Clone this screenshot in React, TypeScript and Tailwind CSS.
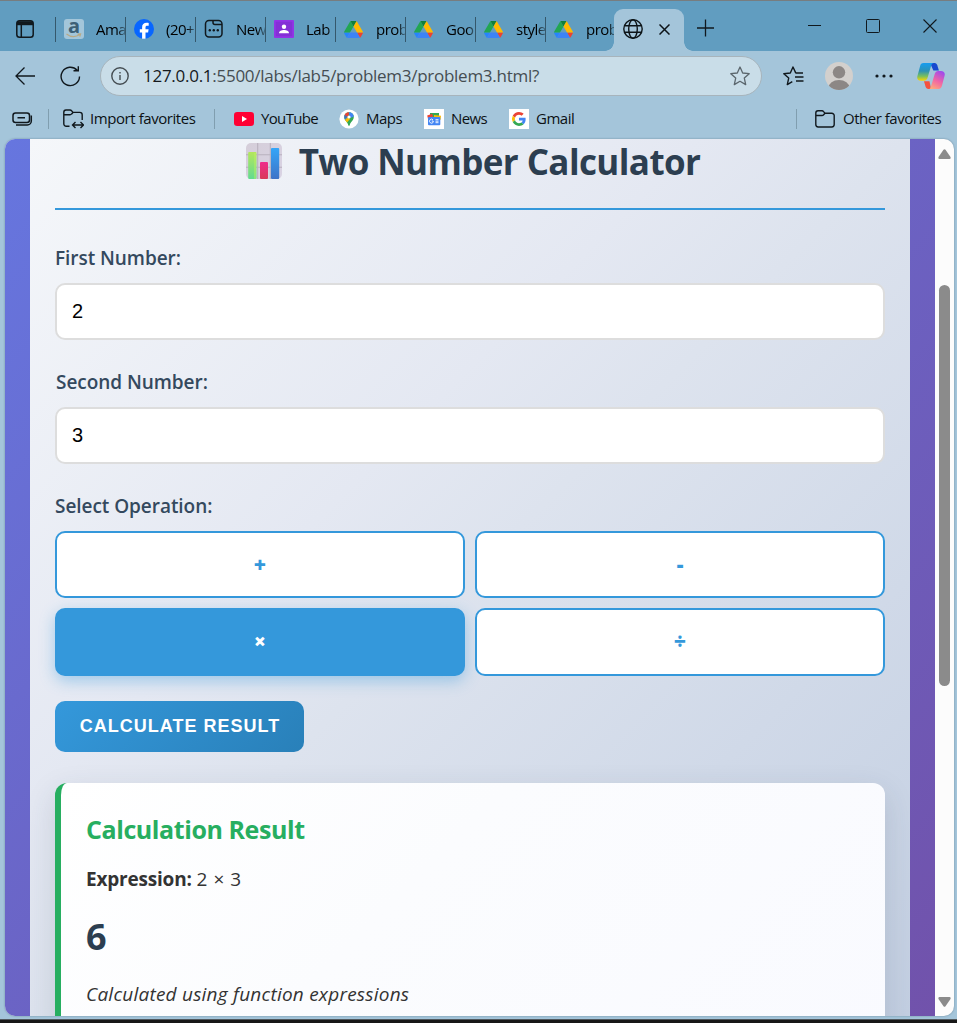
import React, { useState } from "react";

type IconProps = { className?: string };

const Drive = () => (
  <svg width="19" height="17" viewBox="0 0 87.3 78" className="shrink-0">
    <path d="m6.6 66.85 3.85 6.65c.8 1.4 1.95 2.5 3.3 3.3l13.75-23.8h-27.5c0 1.55.4 3.1 1.2 4.5z" fill="#2684fc" />
    <path d="m43.65 25-13.75-23.8c-1.35.8-2.5 1.9-3.3 3.3l-25.4 44a9 9 0 0 0-1.2 4.5h27.5z" fill="#22a652" />
    <path d="m73.55 76.8c1.35-.8 2.5-1.9 3.3-3.3l1.6-2.75 7.65-13.25c.8-1.4 1.2-2.95 1.2-4.5h-27.5l5.85 11.5z" fill="#ea4335" />
    <path d="m43.65 25 13.75-23.8c-1.35-.8-2.9-1.2-4.5-1.2h-18.5c-1.6 0-3.15.45-4.5 1.2z" fill="#128039" />
    <path d="m59.8 53h-32.3l-13.75 23.8c1.35.8 2.9 1.2 4.5 1.2h50.8c1.6 0 3.15-.45 4.5-1.2z" fill="#3c83f6" />
    <path d="m73.4 26.5-12.7-22c-.8-1.4-1.95-2.5-3.3-3.3l-13.75 23.8 16.15 28h27.45c0-1.55-.4-3.1-1.2-4.5z" fill="#ffba00" />
  </svg>
);

const Amazon = () => (
  <span className="relative flex h-5 w-5 shrink-0 justify-center rounded-[3px] bg-[#a3c6da]">
    <span className="font-['Open_Sans',sans-serif] text-[20px] font-bold leading-[14px] text-[#3d6076]">a</span>
    <svg width="16" height="5" viewBox="0 0 16 5" className="absolute bottom-[1px] left-[2px]" fill="none" stroke="#b9a983" strokeWidth="1.2">
      <path d="M0.5 1Q7 6 14 1.6M11.5 1.1L14.6 1L13.8 3.6" />
    </svg>
  </span>
);

const Facebook = () => (
  <svg width="20" height="20" viewBox="0 0 20 20" className="shrink-0">
    <circle cx="10" cy="10" r="10" fill="#0866ff" />
    <path d="M8.1 19.8v-6.3H5.8v-3.2h2.3V8.4c0-3.2 1.6-4.7 4.7-4.7.7 0 1.5.1 1.9.2v2.8h-1.3c-1.5 0-1.9.6-1.9 1.9v1.7h3.1l-.5 3.2h-2.6v6.3z" fill="#fff" />
  </svg>
);

const NewTabIcon = () => (
  <svg width="20" height="20" viewBox="0 0 20 20" fill="none" stroke="#10181d" strokeWidth="1.5" className="shrink-0">
    <rect x="1.5" y="1.5" width="16.5" height="16.5" rx="3.5" />
    <path d="M9 2v1.500a2 2 0 0 0 2 2h7" />
    <g fill="#10181d" stroke="none">
      <circle cx="5.8" cy="11.3" r="1.2" />
      <circle cx="9.8" cy="11.3" r="1.2" />
      <circle cx="13.8" cy="11.3" r="1.2" />
    </g>
  </svg>
);

const Classroom = () => (
  <svg width="20" height="18" viewBox="0 0 20 18" className="shrink-0">
    <rect width="20" height="18" rx="1" fill="#9334e6" />
    <rect x="1.8" y="1.8" width="16.4" height="14.4" fill="#8430d6" />
    <circle cx="10" cy="6.8" r="2.2" fill="#fff" />
    <path d="M5 13.3c0-2.4 2.500-3.400 5-3.400s5 1 5 3.400z" fill="#fff" />
  </svg>
);

const Globe = () => (
  <svg width="20" height="20" viewBox="0 0 20 20" fill="none" stroke="#0d1418" strokeWidth="1.4" className="shrink-0">
    <circle cx="10" cy="10" r="9.2" />
    <ellipse cx="10" cy="10" rx="4.3" ry="9.2" />
    <path d="M1.6 6.7h16.8M1.6 13.3h16.8" />
  </svg>
);

const Maps = () => (
  <svg width="20" height="20" viewBox="0 0 20 20" className="shrink-0">
    <circle cx="10" cy="10" r="9.6" fill="#fff" />
    <clipPath id="pin">
      <path d="M10 3.2a4.8 4.8 0 0 0-4.8 4.8c0 3.5 3.4 4.8 4.1 8.3.1.7 1.3.7 1.4 0 .7-3.5 4.1-4.8 4.1-8.3A4.8 4.8 0 0 0 10 3.2z" />
    </clipPath>
    <g clipPath="url(#pin)">
      <path d="M0 0h20v20H0z" fill="#34a853" />
      <path d="M4 2h6.500l-1 5L6 9z" fill="#ea4335" />
      <path d="M9.500 2H16v5l-5 2z" fill="#4285f4" />
      <path d="M4 12l4-4 3 2-5 6z" fill="#fbbc04" />
      <path d="M3 7l3-1 3 2-4 4z" fill="#1a73e8" opacity=".7" />
    </g>
    <circle cx="10" cy="8" r="1.6" fill="#fff" />
  </svg>
);

const News = () => (
  <svg width="20" height="20" viewBox="0 0 20 20" className="shrink-0">
    <path fill="#fff" d="M0 0h20v20H0z" />
    <path d="M6 4h9v5H6z" fill="#34a853" />
    <path d="M3.2 6.400l5-1.600 1 4-5 2z" fill="#ea4335" />
    <path d="M10 6l7 .7-.4 4H10z" fill="#fbbc04" />
    <rect x="4" y="8" width="12.3" height="8.2" rx="1" fill="#4285f4" />
    <path d="M9 10.800a2 2 0 1 0 .2 2.500V12H7.700M11.500 10.700h3M11.500 12.200h3M11.500 13.700h3" fill="none" stroke="#fff" strokeWidth=".9" />
  </svg>
);

const Google = () => (
  <svg width="20" height="20" viewBox="0 0 20 20" className="shrink-0">
    <path fill="#fff" d="M0 0h20v20H0z" />
    <g transform="translate(3 3) scale(.29)">
      <path fill="#EA4335" d="M24 9.5c3.5 0 6.7 1.2 9.2 3.6l6.9-6.9C35.9 2.4 30.5 0 24 0 14.6 0 6.500 5.400 2.600 13.200l8 6.200C12.400 13.700 17.700 9.500 24 9.500z" />
      <path fill="#4285F4" d="M47 24.600c0-1.600-.2-3.100-.4-4.600H24v9h12.900c-.6 3-2.300 5.500-4.800 7.200l7.700 6C44.400 38 47 31.800 47 24.600z" />
      <path fill="#FBBC05" d="M10.500 28.600a14.500 14.500 0 0 1 0-9.200l-8-6.200a24 24 0 0 0 0 21.600z" />
      <path fill="#34A853" d="M24 48c6.500 0 11.900-2.100 15.900-5.800l-7.700-6c-2.200 1.500-4.900 2.300-8.200 2.300-6.300 0-11.600-4.200-13.500-9.900l-8 6.200C6.500 42.600 14.600 48 24 48z" />
    </g>
  </svg>
);

const YouTube = () => (
  <svg width="20" height="14" viewBox="0 0 20 14" className="shrink-0">
    <rect width="20" height="14" rx="3.2" fill="#ff0033" />
    <path d="M8 4.100v5.800l5-2.900z" fill="#fff" />
  </svg>
);

const Copilot = () => (
  <svg width="28" height="26" viewBox="0 0 28 26" className="shrink-0">
    <defs>
      <linearGradient id="c1" x1="0" y1="0" x2="0" y2="1">
        <stop offset="0" stopColor="#169df0" />
        <stop offset=".45" stopColor="#2c92b5" />
        <stop offset=".75" stopColor="#7bc05a" />
        <stop offset="1" stopColor="#ffd500" />
      </linearGradient>
      <linearGradient id="c2" x1="0.7" y1="0" x2="0.2" y2="1">
        <stop offset="0" stopColor="#a24bea" />
        <stop offset=".5" stopColor="#f065a5" />
        <stop offset="1" stopColor="#ffab79" />
      </linearGradient>
    </defs>
    <path d="M13 0h4.600c1.600 0 2.300 1 2.700 2.300l1.600 5.200h-5.500z" fill="#1748cf" />
    <path d="M6.500 0H17c-1.600 0-2.300 1-2.800 2.600L10.800 14c-.7 2.600-1.700 3.800-4 3.800H4c-3 0-4.400-2-3.500-5L3 3.400C3.600 1 4.500 0 6.500 0z" fill="url(#c1)" />
    <path d="M7 18.300h5.500L14 26h-2.500c-1.700 0-2.500-1-3-2.400z" fill="#f5513d" />
    <path d="M21.500 26H11.300c1.600 0 2.200-1 2.700-2.600L17.400 12c.7-2.600 1.700-4 4-4H24c3 0 4.400 2 3.500 5L25 22.600c-.6 2.400-1.500 3.400-3.500 3.400z" fill="url(#c2)" />
  </svg>
);

const Folder = ({ className }: IconProps) => (
  <svg width="20" height="18" viewBox="0 0 20 18" fill="none" stroke="#10181d" strokeWidth="1.4" className={className}>
    <path d="M.8 4V3A2.200 2.200 0 0 1 3 .8h4c.7 0 1.200.3 1.600.8L10 3.200h6.800A2.400 2.400 0 0 1 19.200 5.600v9a2.400 2.400 0 0 1-2.400 2.400H3.200A2.400 2.400 0 0 1 .8 14.600zM.8 5.500H7c.7 0 1.200-.3 1.600-.8L10 3.200" />
  </svg>
);

const ChartEmoji = () => (
  <svg width="36" height="36" viewBox="0 0 36 36" className="shrink-0">
    <defs>
      <linearGradient id="bg" x1="0" y1="0" x2="1" y2="1">
        <stop offset="0" stopColor="#d5ced9" />
        <stop offset="1" stopColor="#d9d3e4" />
      </linearGradient>
      <linearGradient id="gb" x1="0" y1="0" x2="0" y2="1">
        <stop offset="0" stopColor="#b4e75c" />
        <stop offset="1" stopColor="#62db91" />
      </linearGradient>
      <linearGradient id="rb" x1="0" y1="0" x2="0" y2="1">
        <stop offset="0" stopColor="#ef2c8c" />
        <stop offset="1" stopColor="#d93858" />
      </linearGradient>
      <linearGradient id="bb" x1="0" y1="0" x2="0" y2="1">
        <stop offset="0" stopColor="#34a6f8" />
        <stop offset="1" stopColor="#3f73c7" />
      </linearGradient>
    </defs>
    <rect width="36" height="36" rx="5" fill="url(#bg)" />
    <path d="M11.700 0v36M24.300 0v36M0 11.700h36M0 24.300h36" stroke="#b9b1be" strokeWidth="1.100" />
    <rect x="2.200" y="9" width="8.300" height="27" rx="1" fill="url(#gb)" />
    <path d="M9 10v26" stroke="#c5f260" strokeWidth="1.200" opacity=".7" />
    <rect x="14" y="19" width="8" height="17" rx="1" fill="url(#rb)" />
    <rect x="25" y="5" width="8.200" height="31" rx="1" fill="url(#bb)" />
  </svg>
);

const tabs: { label: string; icon: React.ReactNode }[] = [
  { label: "Ama", icon: <Amazon /> },
  { label: "(20+", icon: <Facebook /> },
  { label: "New", icon: <NewTabIcon /> },
  { label: "Lab", icon: <Classroom /> },
  { label: "prob", icon: <Drive /> },
  { label: "Goo", icon: <Drive /> },
  { label: "style", icon: <Drive /> },
  { label: "prob", icon: <Drive /> },
];

function TabStrip() {
  return (
    <div className="flex h-[51px] shrink-0 border-t border-[#777d80] bg-[#619dc0]">
      <div className="flex w-[55px] items-center pl-4 pt-[6px]">
        <svg width="18" height="18" viewBox="0 0 18 18" fill="none" stroke="#10181d" strokeWidth="1.500">
          <rect x=".8" y=".8" width="16.400" height="16.400" rx="2.800" />
          <path d="M1 3.200h16" strokeWidth="4" />
          <path d="M5.300 4v13" />
        </svg>
      </div>
      {tabs.map((t, i) => (
        <div key={i} className="flex w-[70px] items-center pt-[6px]">
          <div className="mt-px h-[25px] w-px shrink-0 bg-[#35586c]" />
          <div className="flex w-8 shrink-0 items-center pl-2">{t.icon}</div>
          <div className="ml-2 w-[29px] overflow-hidden whitespace-nowrap text-[15px] leading-6 tracking-[-0.500px] text-black [mask-image:linear-gradient(to_right,black_72%,rgba(0,0,0,0.300)_100%)]">
            {t.label}
          </div>
        </div>
      ))}
      <div className="relative -ml-px mt-2 flex w-[70px] items-center rounded-t-[9px] bg-[#a4c5da] pl-[9px]">
        <div className="absolute -left-[9px] bottom-0 h-[9px] w-[9px] bg-[radial-gradient(circle_at_0_0,transparent_8.500px,#a4c5da_9px)]" />
        <div className="absolute -right-[9px] bottom-0 h-[9px] w-[9px] bg-[radial-gradient(circle_at_100%_0,transparent_8.500px,#a4c5da_9px)]" />
        <div className="-mt-[2px]"><Globe /></div>
        <svg width="11" height="11" viewBox="0 0 11 11" stroke="#0d1418" strokeWidth="1.500" className="-mt-px ml-4">
          <path d="M.5.5l10 10M10.500.5l-10 10" />
        </svg>
      </div>
      <svg width="17" height="18" viewBox="0 0 17 18" stroke="#10181d" strokeWidth="1.300" className="ml-[13px] mt-[18px]">
        <path d="M0 9h17M8.500 .5v17" />
      </svg>
      <div className="ml-auto flex items-start pr-[20px] pt-[18px]">
        <svg width="13" height="14" viewBox="0 0 13 14" stroke="#10181d" className="mr-[45px]"><path d="M0 6.500h13" /></svg>
        <svg width="14" height="14" viewBox="0 0 14 14" stroke="#10181d" fill="none" className="mr-[43px]"><rect x=".5" y=".5" width="13" height="13" rx="1" /></svg>
        <svg width="14" height="14" viewBox="0 0 14 14" stroke="#10181d" strokeWidth="1.100"><path d="M.5.5l13 13M13.500.5l-13 13" /></svg>
      </div>
    </div>
  );
}

function AddressBar() {
  return (
    <div className="flex h-[50px] shrink-0 items-center pl-[15px] pr-[12px]">
      <svg width="20" height="18" viewBox="0 0 20 18" fill="none" stroke="#10181d" strokeWidth="1.300">
        <path d="M20 9H1M9.500 .5L1 9l8.500 8.500" />
      </svg>
      <svg width="21" height="21" viewBox="0 0 21 21" fill="none" stroke="#10181d" strokeWidth="1.400" className="ml-[25px]">
        <path d="M19.500 10.500a9.200 9.200 0 1 1-2.400-6.300M13.500 4.700h4.800V.2" />
      </svg>
      <div className="ml-[19px] flex h-10 w-[662px] items-center rounded-full border border-[#a7b4bc] bg-[#c9dde8] pl-[10px] pr-[11px]">
        <svg width="18" height="18" viewBox="0 0 18 18" fill="none" stroke="#454d52" strokeWidth="1.400">
          <circle cx="9" cy="9" r="8.200" />
          <path d="M9 8v5M9 5v1.600" />
        </svg>
        <span className="ml-[14px] whitespace-nowrap text-[17px] leading-6 tracking-[-0.270px] text-[#454d52]">
          <span className="text-[#15191c]">127.0.0.1</span>:5500/labs/lab5/problem3/problem3.html?
        </span>
        <svg width="20" height="20" viewBox="0 0 20 20" fill="none" stroke="#5b666d" strokeWidth="1.300" strokeLinejoin="round" className="ml-auto">
          <path d="M10 1l2.700 6 6.500.7-4.900 4.400 1.400 6.500-5.700-3.300-5.700 3.300 1.400-6.500L.8 7.700l6.500-.7z" />
        </svg>
      </div>
      <svg width="21" height="20" viewBox="0 0 21 20" fill="none" stroke="#10181d" strokeWidth="1.400" strokeLinejoin="round" className="ml-[21px]">
        <path d="M14 6.900h-1.300L10 1 7.300 7l-6.500.7 4.900 4.400-1.400 6.500 5-2.900M13 7h7M12 11h8.500M13 15h7.500" />
      </svg>
      <svg width="28" height="28" viewBox="0 0 28 28" className="ml-[21px]">
        <clipPath id="av"><circle cx="14" cy="14" r="14" /></clipPath>
        <circle cx="14" cy="14" r="14" fill="#d3d0cd" />
        <circle cx="14" cy="10.300" r="6.200" fill="#8c8785" />
        <ellipse cx="14" cy="26" rx="10.500" ry="8" fill="#8c8785" clipPath="url(#av)" />
      </svg>
      <svg width="18" height="4" viewBox="0 0 18 4" fill="#10181d" className="ml-[22px]">
        <circle cx="2" cy="2" r="1.600" /><circle cx="9" cy="2" r="1.600" /><circle cx="16" cy="2" r="1.600" />
      </svg>
      <div className="ml-auto"><Copilot /></div>
    </div>
  );
}

function Favorites() {
  const text = "whitespace-nowrap text-[15px] leading-5 text-[#0c1114]";
  return (
    <div className="flex h-[38px] shrink-0 items-center pb-[3px] pl-3 pr-[15px]">
      <svg width="21" height="14" viewBox="0 0 21 14" fill="none" stroke="#10181d" strokeWidth="1.500">
        <rect x="1" y="1" width="16.500" height="9.500" rx="2.500" />
        <path d="M5.500 5.700h7.500M19.300 3.500V9a4 4 0 0 1-4 4H4" />
      </svg>
      <div className="ml-[15px] h-5 w-px bg-[#809eaf]" />
      <svg width="21" height="20" viewBox="0 0 21 20" fill="none" stroke="#10181d" strokeWidth="1.400" className="ml-[14px]">
        <path d="M6.500 17.200H3.200A2.400 2.400 0 0 1 .8 14.800V3.200A2.200 2.200 0 0 1 3 1h4c.7 0 1.200.3 1.600.8L10 3.400h6.800a2.400 2.400 0 0 1 2.400 2.400V11M.8 5.700H7c.7 0 1.200-.3 1.600-.8L10 3.400M10 16h10M12.500 13l-3 3 3 3M17.500 13l3 3-3 3" />
      </svg>
      <span className={`${text} -mt-px ml-[6px] w-[124px] tracking-[-0.430px]`}>Import favorites</span>
      <div className="h-5 w-px bg-[#809eaf]" />
      <div className="ml-[19px]"><YouTube /></div>
      <span className={`${text} -mt-px ml-[7px] w-[78px] tracking-[-0.650px]`}>YouTube</span>
      <Maps />
      <span className={`${text} -mt-px ml-[7px] w-[58px] tracking-[-0.500px]`}>Maps</span>
      <News />
      <span className={`${text} -mt-px ml-[7px] w-[58px] tracking-[-0.600px]`}>News</span>
      <Google />
      <span className={`${text} -mt-px ml-[7px] tracking-[-0.500px]`}>Gmail</span>
      <div className="ml-auto h-5 w-px bg-[#809eaf]" />
      <Folder className="ml-[18px]" />
      <span className={`${text} -mt-px ml-[8px] w-[99px] tracking-[-0.480px]`}>Other favorites</span>
    </div>
  );
}

const ops = ["+", "-", "×", "÷"];

function Calculator() {
  const [a, setA] = useState("2");
  const [b, setB] = useState("3");
  const [op, setOp] = useState("×");
  const label = "block h-[26px] whitespace-nowrap text-[19px] font-semibold leading-[26px] text-[#34495e] tracking-[-0.050px]";
  const input =
    "mt-3 block h-[57px] w-full rounded-[10px] border-2 border-[#dddddd] bg-white px-[15px] font-['Liberation_Sans',Arial,sans-serif] text-[20px] text-black outline-none";
  return (
    <main className="h-full w-[880px] shrink-0 overflow-hidden bg-[linear-gradient(135deg,#f5f7fa_0%,#e4e8f2_38%,#dde3ee_50%,#c3cfe2_100%)] px-[25px]">
      <h1 className="flex h-[71px] items-start justify-center border-b-2 border-[#3498db] pl-[6px] pt-[4px]">
        <ChartEmoji />
        <span className="ml-[17px] -mt-[5px] whitespace-nowrap text-[35px] font-bold leading-[48px] tracking-[-0.600px] text-[#2c3e50]">Two Number Calculator</span>
      </h1>
      <div className="mt-[35px]">
        <label className={label}>First Number:</label>
        <input className={input} value={a} onChange={(e) => setA(e.target.value)} />
      </div>
      <div className="mt-[29px]">
        <label className={`${label} pl-px`}>Second Number:</label>
        <input className={input} value={b} onChange={(e) => setB(e.target.value)} />
      </div>
      <div className="mt-[29px]">
        <span className={label}>Select Operation:</span>
        <div className="mt-3 grid grid-cols-2 grid-rows-[67px_68px] gap-[10px]">
          {ops.map((o) => (
            <button
              key={o}
              onClick={() => setOp(o)}
              className={`flex items-center justify-center rounded-[10px] border-2 border-[#3498db] text-[21px] font-extrabold ${
                o === op ? "bg-[#3498db] text-white shadow-[0_5px_15px_rgba(52,152,219,0.4)]" : "bg-white text-[#3498db]"
              }`}
            >
              {o}
            </button>
          ))}
        </div>
      </div>
      <button className="mt-[25px] flex h-[51px] w-[249px] items-center justify-center whitespace-nowrap rounded-[10px] bg-[linear-gradient(135deg,#3498db,#2980b9)] pl-px font-['Liberation_Sans',Arial,sans-serif] text-[18px] font-bold tracking-[1px] text-white">
        CALCULATE RESULT
      </button>
      <section className="mt-[31px] h-[300px] rounded-[12px] border-l-[6px] border-[#27ae60] bg-[linear-gradient(135deg,#ffffff,#fbfcfe_40%,#f9faff)] pl-[25px] pt-[30px] text-[#333333] shadow-[0_10px_30px_rgba(44,62,80,0.150)]">
        <h2 className="-mt-px whitespace-nowrap text-[25px] font-bold leading-[34px] tracking-[-0.420px] text-[#27ae60]">Calculation Result</h2>
        <p className="mt-[18px] whitespace-nowrap text-[19px] leading-[30px]">
          <strong className="tracking-[-0.200px]">Expression:</strong> <span className="tracking-[0.500px]">2 × 3</span>
        </p>
        <p className="mt-[18px] text-[36px] font-bold leading-[50px] text-[#2c3e50]">6</p>
        <p className="mt-[18px] whitespace-nowrap text-[19px] italic leading-[28px] tracking-[0.230px]">Calculated using function expressions</p>
      </section>
    </main>
  );
}

export default function App() {
  return (
    <div className="flex h-[1023px] w-[957px] flex-col overflow-hidden bg-[#a4c5da] font-['Open_Sans','Noto_Sans',sans-serif]">
      <TabStrip />
      <AddressBar />
      <Favorites />
      <div className="ml-[5px] flex h-[877px] w-[949px] shrink-0 overflow-hidden rounded-[10px] bg-[#fcfcfc] shadow-[0_0_2px_rgba(60,90,110,0.600)]">
        <div className="flex w-[930px] shrink-0 justify-center bg-[linear-gradient(135deg,#6676df_0%,#6b63c4_50%,#7152ab_100%)]">
          <Calculator />
        </div>
        <div className="flex w-[19px] shrink-0 flex-col items-center">
          <svg width="13" height="10" viewBox="0 0 13 10" fill="#8b8b8b" className="mt-[10px]"><path d="M5.500.7q1-1 2 0l5 7.300q.5 2-1 2h-10q-1.500 0-1-2z" /></svg>
          <div className="mt-[126px] h-[401px] w-[11px] rounded-full bg-[#8b8b8b]" />
          <svg width="13" height="10" viewBox="0 0 13 10" fill="#8b8b8b" className="mb-[9px] mt-auto rotate-180"><path d="M5.500.7q1-1 2 0l5 7.300q.5 2-1 2h-10q-1.500 0-1-2z" /></svg>
        </div>
      </div>
      <div className="mt-[3px] h-1 shrink-0 border-t border-[#50585d] bg-[#171717]" />
    </div>
  );
}
